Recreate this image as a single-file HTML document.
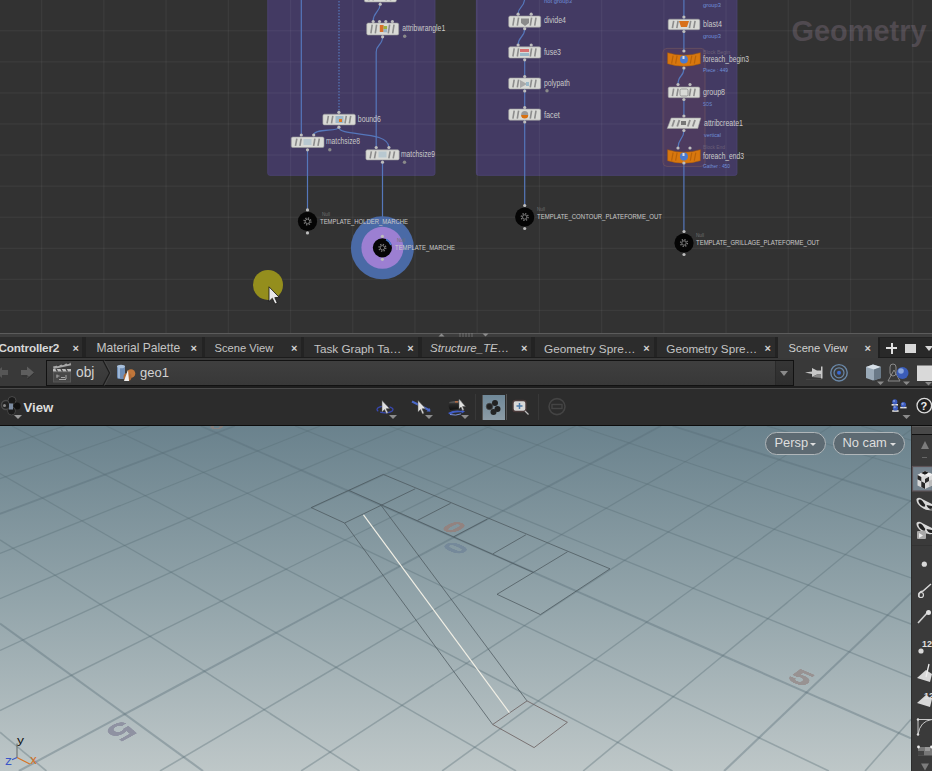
<!DOCTYPE html>
<html><head><meta charset="utf-8"><style>
*{margin:0;padding:0;box-sizing:border-box}
html,body{width:932px;height:771px;overflow:hidden;background:#2b2b2b;font-family:"Liberation Sans",sans-serif}
.abs{position:absolute}
.tab{position:absolute;top:337px;height:20px;background:#2c2c2c}
.tt{position:absolute;top:340.7px;line-height:15px;color:#c4c4c4;font-size:12px;white-space:nowrap}
.x{position:absolute;top:340.8px;font-size:11px;font-weight:700;color:#d4d4d4;line-height:15px}
</style></head><body>
<svg width="932" height="333" viewBox="0 0 932 333" style="position:absolute;left:0;top:0;font-family:"Liberation Sans", sans-serif"><rect width="932" height="333" fill="#323232"/><text x="791.5" y="41" font-size="30" font-weight="700" fill="#504a50" textLength="135" lengthAdjust="spacingAndGlyphs">Geometry</text><rect x="267.8" y="-5" width="167.1" height="180.3" rx="2" fill="#433a63" stroke="#4a4270" stroke-width="1"/><rect x="476.4" y="-5" width="260.5" height="180.3" rx="2" fill="#433a63" stroke="#4a4270" stroke-width="1"/><rect x="41" y="0" width="1.3" height="333" fill="#ffffff" fill-opacity="0.048"/><rect x="103.2" y="0" width="1.3" height="333" fill="#ffffff" fill-opacity="0.048"/><rect x="165.4" y="0" width="1.3" height="333" fill="#ffffff" fill-opacity="0.048"/><rect x="227.7" y="0" width="1.3" height="333" fill="#ffffff" fill-opacity="0.048"/><rect x="289.9" y="0" width="1.3" height="333" fill="#ffffff" fill-opacity="0.048"/><rect x="352.1" y="0" width="1.3" height="333" fill="#ffffff" fill-opacity="0.048"/><rect x="414.3" y="0" width="1.3" height="333" fill="#ffffff" fill-opacity="0.048"/><rect x="476.5" y="0" width="1.3" height="333" fill="#ffffff" fill-opacity="0.048"/><rect x="538.8" y="0" width="1.3" height="333" fill="#ffffff" fill-opacity="0.048"/><rect x="601" y="0" width="1.3" height="333" fill="#ffffff" fill-opacity="0.048"/><rect x="663.2" y="0" width="1.3" height="333" fill="#ffffff" fill-opacity="0.048"/><rect x="725.4" y="0" width="1.3" height="333" fill="#ffffff" fill-opacity="0.048"/><rect x="787.6" y="0" width="1.3" height="333" fill="#ffffff" fill-opacity="0.048"/><rect x="849.9" y="0" width="1.3" height="333" fill="#ffffff" fill-opacity="0.048"/><rect x="912.1" y="0" width="1.3" height="333" fill="#ffffff" fill-opacity="0.048"/><rect x="0" y="30.1" width="932" height="1.3" fill="#ffffff" fill-opacity="0.048"/><rect x="0" y="61.2" width="932" height="1.3" fill="#ffffff" fill-opacity="0.048"/><rect x="0" y="92.3" width="932" height="1.3" fill="#ffffff" fill-opacity="0.048"/><rect x="0" y="123.3" width="932" height="1.3" fill="#ffffff" fill-opacity="0.048"/><rect x="0" y="154.4" width="932" height="1.3" fill="#ffffff" fill-opacity="0.048"/><rect x="0" y="185.5" width="932" height="1.3" fill="#ffffff" fill-opacity="0.048"/><rect x="0" y="216.6" width="932" height="1.3" fill="#ffffff" fill-opacity="0.048"/><rect x="0" y="247.7" width="932" height="1.3" fill="#ffffff" fill-opacity="0.048"/><rect x="0" y="278.7" width="932" height="1.3" fill="#ffffff" fill-opacity="0.048"/><rect x="0" y="309.8" width="932" height="1.3" fill="#ffffff" fill-opacity="0.048"/><rect x="663" y="48.4" width="42" height="118" rx="4" fill="#5a3f5a" fill-opacity="0.45" stroke="#6a5060" stroke-width="0.8"/><path d="M301.3 -2 V135" stroke="#5577bb" stroke-width="1.2" fill="none"/><path d="M339 -2 V112" stroke="#5577bb" stroke-width="1.2" fill="none" stroke-dasharray="1.5 1.5"/><path d="M380.2 4 C380.2 12 373.2 12 373.2 21" stroke="#5577bb" stroke-width="1.2" fill="none"/><path d="M382.6 36.6 C382.6 46 376.2 44 376.2 52 V147.5" stroke="#5577bb" stroke-width="1.2" fill="none"/><path d="M338.9 127.2 C338.9 132 313.7 128 313.7 135" stroke="#5577bb" stroke-width="1.2" fill="none"/><path d="M338.9 127.2 C338.9 137 388.9 130 388.9 147.5" stroke="#5577bb" stroke-width="1.2" fill="none"/><path d="M307.5 150 V211" stroke="#5577bb" stroke-width="1.2" fill="none"/><path d="M382.5 162 V237" stroke="#5577bb" stroke-width="1.2" fill="none"/><path d="M524.7 -2 C524.7 8 518.1 6 518.1 14" stroke="#5577bb" stroke-width="1.2" fill="none"/><path d="M524.7 28.7 C524.7 38 518.1 36 518.1 45" stroke="#5577bb" stroke-width="1.2" fill="none"/><path d="M524.7 59.8 V207" stroke="#5577bb" stroke-width="1.2" fill="none"/><path d="M683.9 -2 V51" stroke="#5577bb" stroke-width="1.2" fill="none"/><path d="M683.9 68 C683.9 78 678 74 678 84.5" stroke="#5577bb" stroke-width="1.2" fill="none"/><path d="M683.9 99.5 V116" stroke="#5577bb" stroke-width="1.2" fill="none"/><path d="M683.9 130.5 C683.9 140 678 138 678 148" stroke="#5577bb" stroke-width="1.2" fill="none"/><path d="M683.9 163.5 V233" stroke="#5577bb" stroke-width="1.2" fill="none"/><rect x="364.4" y="-9" width="32" height="11" rx="1.5" fill="#d9dad6" stroke="#9a9a9a" stroke-width="0.6"/><path d="M369.9 -7.4 L368.6 0.4" stroke="#8c8c8c" stroke-width="1.6"/><path d="M374.3 -7.4 L373 0.4" stroke="#8c8c8c" stroke-width="1.6"/><path d="M387.3 -7.4 L386 0.4" stroke="#8c8c8c" stroke-width="1.6"/><path d="M391.7 -7.4 L390.4 0.4" stroke="#8c8c8c" stroke-width="1.6"/><circle cx="380.2" cy="4.2" r="1.6" fill="#bdbdbd"/><rect x="366.7" y="23" width="32" height="12" rx="1.5" fill="#d9dad6" stroke="#9a9a9a" stroke-width="0.6"/><path d="M372.2 24.6 L370.9 33.4" stroke="#8c8c8c" stroke-width="1.6"/><path d="M376.6 24.6 L375.3 33.4" stroke="#8c8c8c" stroke-width="1.6"/><path d="M389.6 24.6 L388.3 33.4" stroke="#8c8c8c" stroke-width="1.6"/><path d="M394 24.6 L392.7 33.4" stroke="#8c8c8c" stroke-width="1.6"/><rect x="379.8" y="25" width="3.8" height="7" fill="#d8702a"/><rect x="383.5" y="26" width="3.6" height="3" fill="#9ab040"/><rect x="383.5" y="29" width="3.6" height="3.3" fill="#9ab4c4"/><circle cx="373.2" cy="21.5" r="1.6" fill="#bdbdbd"/><circle cx="379.5" cy="21.5" r="1.6" fill="#bdbdbd"/><circle cx="385.8" cy="21.5" r="1.6" fill="#bdbdbd"/><circle cx="392.4" cy="21.5" r="1.6" fill="#bdbdbd"/><circle cx="382.6" cy="36.8" r="1.6" fill="#bdbdbd"/><text x="402.2" y="31.2" font-size="9" fill="#c9c9c9" font-weight="400" textLength="43" lengthAdjust="spacingAndGlyphs">attribwrangle1</text><circle cx="404.7" cy="36.2" r="1.7" fill="#8a8a8a"/><rect x="322.9" y="114.2" width="32.5" height="10.7" rx="1.5" fill="#d9dad6" stroke="#9a9a9a" stroke-width="0.6"/><path d="M328.4 115.8 L327.1 123.3" stroke="#8c8c8c" stroke-width="1.6"/><path d="M332.8 115.8 L331.5 123.3" stroke="#8c8c8c" stroke-width="1.6"/><path d="M346.3 115.8 L345 123.3" stroke="#8c8c8c" stroke-width="1.6"/><path d="M350.7 115.8 L349.4 123.3" stroke="#8c8c8c" stroke-width="1.6"/><rect x="335.5" y="116" width="8" height="7" fill="#9fb8c8"/><rect x="339" y="119" width="3" height="3" fill="#e07820"/><circle cx="338.9" cy="112.3" r="1.6" fill="#bdbdbd"/><circle cx="338.9" cy="127.2" r="1.6" fill="#bdbdbd"/><text x="357.8" y="122" font-size="9" fill="#c9c9c9" font-weight="400" textLength="23" lengthAdjust="spacingAndGlyphs">bound6</text><rect x="291.3" y="137" width="32.7" height="10.5" rx="1.5" fill="#d9dad6" stroke="#9a9a9a" stroke-width="0.6"/><path d="M296.8 138.6 L295.5 145.9" stroke="#8c8c8c" stroke-width="1.6"/><path d="M301.2 138.6 L299.9 145.9" stroke="#8c8c8c" stroke-width="1.6"/><path d="M314.9 138.6 L313.6 145.9" stroke="#8c8c8c" stroke-width="1.6"/><path d="M319.3 138.6 L318 145.9" stroke="#8c8c8c" stroke-width="1.6"/><rect x="303.5" y="139" width="8" height="6" fill="#b8c8d0"/><circle cx="301.3" cy="135" r="1.6" fill="#bdbdbd"/><circle cx="313.7" cy="135" r="1.6" fill="#bdbdbd"/><circle cx="307.5" cy="149.8" r="1.6" fill="#bdbdbd"/><text x="326" y="143.8" font-size="9" fill="#c9c9c9" font-weight="400" textLength="34" lengthAdjust="spacingAndGlyphs">matchsize8</text><circle cx="329.8" cy="149.8" r="1.7" fill="#8a8a8a"/><rect x="365.9" y="149.8" width="33.3" height="10.1" rx="1.5" fill="#d9dad6" stroke="#9a9a9a" stroke-width="0.6"/><path d="M371.4 151.4 L370.1 158.3" stroke="#8c8c8c" stroke-width="1.6"/><path d="M375.8 151.4 L374.5 158.3" stroke="#8c8c8c" stroke-width="1.6"/><path d="M390.1 151.4 L388.8 158.3" stroke="#8c8c8c" stroke-width="1.6"/><path d="M394.5 151.4 L393.2 158.3" stroke="#8c8c8c" stroke-width="1.6"/><rect x="378.5" y="151.5" width="8" height="6" fill="#b8c8d0"/><circle cx="376.2" cy="147.5" r="1.6" fill="#bdbdbd"/><circle cx="388.9" cy="147.5" r="1.6" fill="#bdbdbd"/><circle cx="382.5" cy="162.2" r="1.6" fill="#bdbdbd"/><text x="401" y="156.8" font-size="9" fill="#c9c9c9" font-weight="400" textLength="34" lengthAdjust="spacingAndGlyphs">matchsize9</text><circle cx="404.5" cy="162.2" r="1.7" fill="#8a8a8a"/><circle cx="382.4" cy="247.8" r="31.5" fill="#4a6aa6"/><circle cx="382.4" cy="247.8" r="21" fill="#9c7fd2"/><circle cx="307.5" cy="221.4" r="9.6" fill="#050505"/><circle cx="307.5" cy="221.4" r="3.4" fill="none" stroke="#7a7a7a" stroke-width="1.4" stroke-dasharray="1.3 1.37"/><circle cx="307.5" cy="221.4" r="2.2" fill="none" stroke="#7a7a7a" stroke-width="1"/><circle cx="307.5" cy="209.9" r="1.6" fill="#bdbdbd"/><circle cx="307.5" cy="232.9" r="1.6" fill="#bdbdbd"/><circle cx="382.4" cy="247.8" r="9.6" fill="#050505"/><circle cx="382.4" cy="247.8" r="3.4" fill="none" stroke="#7a7a7a" stroke-width="1.4" stroke-dasharray="1.3 1.37"/><circle cx="382.4" cy="247.8" r="2.2" fill="none" stroke="#7a7a7a" stroke-width="1"/><circle cx="382.4" cy="236.3" r="1.6" fill="#bdbdbd"/><circle cx="382.4" cy="259.3" r="1.6" fill="#bdbdbd"/><path d="M386 239.5 A9 9 0 0 1 391 245" stroke="#4a7ad0" stroke-width="1.6" fill="none"/><text x="320" y="223.5" font-size="7" fill="#c9c9c9" font-weight="400" textLength="88" lengthAdjust="spacingAndGlyphs">TEMPLATE_HOLDER_MARCHE</text><text x="322" y="215.5" font-size="5" fill="#707070" font-weight="400" textLength="8" lengthAdjust="spacingAndGlyphs">Null</text><text x="395" y="249.8" font-size="7" fill="#c9c9c9" font-weight="400" textLength="60" lengthAdjust="spacingAndGlyphs">TEMPLATE_MARCHE</text><text x="397" y="242" font-size="5" fill="#707070" font-weight="400" textLength="8" lengthAdjust="spacingAndGlyphs">Null</text><text x="544" y="3" font-size="6" fill="#6f8fd8" font-weight="400" textLength="28" lengthAdjust="spacingAndGlyphs">not group3</text><rect x="508.7" y="16" width="32" height="11.2" rx="1.5" fill="#d9dad6" stroke="#9a9a9a" stroke-width="0.6"/><path d="M514.2 17.6 L512.9 25.6" stroke="#8c8c8c" stroke-width="1.6"/><path d="M518.6 17.6 L517.3 25.6" stroke="#8c8c8c" stroke-width="1.6"/><path d="M531.6 17.6 L530.3 25.6" stroke="#8c8c8c" stroke-width="1.6"/><path d="M536 17.6 L534.7 25.6" stroke="#8c8c8c" stroke-width="1.6"/><path d="M521 18.5 H529 V23 L525 26 L521 23 Z" fill="#8a8a8a"/><circle cx="518.1" cy="14.2" r="1.6" fill="#bdbdbd"/><circle cx="531.2" cy="14.2" r="1.6" fill="#bdbdbd"/><circle cx="524.7" cy="28.7" r="1.6" fill="#bdbdbd"/><text x="543.9" y="23" font-size="9" fill="#c9c9c9" font-weight="400" textLength="22" lengthAdjust="spacingAndGlyphs">divide4</text><rect x="508.7" y="46.8" width="32" height="11.3" rx="1.5" fill="#d9dad6" stroke="#9a9a9a" stroke-width="0.6"/><path d="M514.2 48.4 L512.9 56.5" stroke="#8c8c8c" stroke-width="1.6"/><path d="M518.6 48.4 L517.3 56.5" stroke="#8c8c8c" stroke-width="1.6"/><path d="M531.6 48.4 L530.3 56.5" stroke="#8c8c8c" stroke-width="1.6"/><path d="M536 48.4 L534.7 56.5" stroke="#8c8c8c" stroke-width="1.6"/><rect x="520" y="49" width="9" height="3" fill="#d77070"/><rect x="520" y="53" width="9" height="3" fill="#9ab8c8"/><circle cx="518.1" cy="45" r="1.6" fill="#bdbdbd"/><circle cx="531.2" cy="45" r="1.6" fill="#bdbdbd"/><circle cx="524.7" cy="59.8" r="1.6" fill="#bdbdbd"/><text x="543.9" y="55" font-size="9" fill="#c9c9c9" font-weight="400" textLength="17" lengthAdjust="spacingAndGlyphs">fuse3</text><rect x="508.7" y="78" width="32" height="11" rx="1.5" fill="#d9dad6" stroke="#9a9a9a" stroke-width="0.6"/><path d="M514.2 79.6 L512.9 87.4" stroke="#8c8c8c" stroke-width="1.6"/><path d="M518.6 79.6 L517.3 87.4" stroke="#8c8c8c" stroke-width="1.6"/><path d="M531.6 79.6 L530.3 87.4" stroke="#8c8c8c" stroke-width="1.6"/><path d="M536 79.6 L534.7 87.4" stroke="#8c8c8c" stroke-width="1.6"/><path d="M520 80 L527 84 L520 88 Z" fill="#a8a8a8"/><rect x="526" y="82" width="3" height="4" fill="#9ab8c8"/><circle cx="524.7" cy="76.5" r="1.6" fill="#bdbdbd"/><circle cx="524.7" cy="91" r="1.6" fill="#bdbdbd"/><text x="543.9" y="86" font-size="9" fill="#c9c9c9" font-weight="400" textLength="26" lengthAdjust="spacingAndGlyphs">polypath</text><circle cx="547" cy="90.8" r="1.7" fill="#8a8a8a"/><rect x="508.7" y="109" width="32" height="11.2" rx="1.5" fill="#d9dad6" stroke="#9a9a9a" stroke-width="0.6"/><path d="M514.2 110.6 L512.9 118.6" stroke="#8c8c8c" stroke-width="1.6"/><path d="M518.6 110.6 L517.3 118.6" stroke="#8c8c8c" stroke-width="1.6"/><path d="M531.6 110.6 L530.3 118.6" stroke="#8c8c8c" stroke-width="1.6"/><path d="M536 110.6 L534.7 118.6" stroke="#8c8c8c" stroke-width="1.6"/><circle cx="524.7" cy="114.5" r="3.5" fill="#999"/><path d="M521.2 115 H528.2 A3.5 3.5 0 0 1 521.2 115 Z" fill="#d8700f"/><circle cx="524.7" cy="107.5" r="1.6" fill="#bdbdbd"/><circle cx="524.7" cy="122" r="1.6" fill="#bdbdbd"/><text x="543.9" y="117.5" font-size="9" fill="#c9c9c9" font-weight="400" textLength="16" lengthAdjust="spacingAndGlyphs">facet</text><circle cx="524.7" cy="217" r="9.6" fill="#050505"/><circle cx="524.7" cy="217" r="3.4" fill="none" stroke="#7a7a7a" stroke-width="1.4" stroke-dasharray="1.3 1.37"/><circle cx="524.7" cy="217" r="2.2" fill="none" stroke="#7a7a7a" stroke-width="1"/><circle cx="524.7" cy="205.5" r="1.6" fill="#bdbdbd"/><circle cx="524.7" cy="228.5" r="1.6" fill="#bdbdbd"/><text x="537" y="218.7" font-size="7" fill="#c9c9c9" font-weight="400" textLength="125" lengthAdjust="spacingAndGlyphs">TEMPLATE_CONTOUR_PLATEFORME_OUT</text><text x="537" y="211" font-size="5" fill="#707070" font-weight="400" textLength="8" lengthAdjust="spacingAndGlyphs">Null</text><text x="703" y="7" font-size="6" fill="#6f8fd8" font-weight="400" textLength="18" lengthAdjust="spacingAndGlyphs">group3</text><rect x="668.2" y="19.2" width="31.6" height="10.5" rx="1.5" fill="#d9dad6" stroke="#9a9a9a" stroke-width="0.6"/><path d="M673.7 20.8 L672.4 28.1" stroke="#8c8c8c" stroke-width="1.6"/><path d="M678.1 20.8 L676.8 28.1" stroke="#8c8c8c" stroke-width="1.6"/><path d="M690.7 20.8 L689.4 28.1" stroke="#8c8c8c" stroke-width="1.6"/><path d="M695.1 20.8 L693.8 28.1" stroke="#8c8c8c" stroke-width="1.6"/><path d="M679 21 H689 L687 27 H681 Z" fill="#d8701a"/><circle cx="683.9" cy="17" r="1.6" fill="#bdbdbd"/><circle cx="683.9" cy="31.5" r="1.6" fill="#bdbdbd"/><text x="703" y="26.5" font-size="9" fill="#c9c9c9" font-weight="400" textLength="19" lengthAdjust="spacingAndGlyphs">blast4</text><text x="703" y="37.5" font-size="6" fill="#6f8fd8" font-weight="400" textLength="18" lengthAdjust="spacingAndGlyphs">group3</text><path d="M667.6 52.7 Q684 57.7 700.3 52.7 V63.7 Q684 68.7 667.6 63.7 Z" fill="#d8770e" stroke="#a85a08" stroke-width="0.5"/><path d="M673.1 55.7 L671.6 63.7" stroke="#b8620a" stroke-width="1.2"/><path d="M677.1 55.7 L675.6 63.7" stroke="#b8620a" stroke-width="1.2"/><path d="M691.8 55.7 L690.3 63.7" stroke="#b8620a" stroke-width="1.2"/><path d="M695.8 55.7 L694.3 63.7" stroke="#b8620a" stroke-width="1.2"/><circle cx="683.9" cy="59.5" r="4" fill="#4a7ad0"/><rect x="682.5" y="56" width="2" height="3" fill="#ddd"/><circle cx="683.9" cy="51" r="1.6" fill="#bdbdbd"/><circle cx="683.9" cy="68" r="1.6" fill="#bdbdbd"/><text x="703" y="54" font-size="5.5" fill="#6a5f78" font-weight="400" textLength="27" lengthAdjust="spacingAndGlyphs">Block Begin</text><text x="703" y="62" font-size="9" fill="#c9c9c9" font-weight="400" textLength="46" lengthAdjust="spacingAndGlyphs">foreach_begin3</text><text x="703" y="71.5" font-size="5.5" fill="#6f8fd8" font-weight="400" textLength="25" lengthAdjust="spacingAndGlyphs">Piece : 449</text><rect x="668.2" y="87" width="31.6" height="10.7" rx="1.5" fill="#d9dad6" stroke="#9a9a9a" stroke-width="0.6"/><path d="M673.7 88.6 L672.4 96.1" stroke="#8c8c8c" stroke-width="1.6"/><path d="M678.1 88.6 L676.8 96.1" stroke="#8c8c8c" stroke-width="1.6"/><path d="M690.7 88.6 L689.4 96.1" stroke="#8c8c8c" stroke-width="1.6"/><path d="M695.1 88.6 L693.8 96.1" stroke="#8c8c8c" stroke-width="1.6"/><rect x="680" y="89" width="8" height="7" rx="1.5" fill="none" stroke="#888" stroke-width="0.8"/><circle cx="678" cy="84.5" r="1.6" fill="#bdbdbd"/><circle cx="690" cy="84.5" r="1.6" fill="#bdbdbd"/><circle cx="683.9" cy="99.5" r="1.6" fill="#bdbdbd"/><text x="703" y="94.5" font-size="9" fill="#c9c9c9" font-weight="400" textLength="22" lengthAdjust="spacingAndGlyphs">group8</text><text x="703" y="105.5" font-size="5.5" fill="#6f8fd8" font-weight="400" textLength="9" lengthAdjust="spacingAndGlyphs">SOS</text><path d="M671.2 118 H700.8 L697.8 128.5 H667.2 Z" fill="#d9dad6" stroke="#9a9a9a" stroke-width="0.6"/><path d="M674.4 120 L672.2 126.5" stroke="#8e8e8e" stroke-width="1.8"/><path d="M679.4 120 L677.2 126.5" stroke="#8e8e8e" stroke-width="1.8"/><path d="M690 120 L687.8 126.5" stroke="#8e8e8e" stroke-width="1.8"/><path d="M695 120 L692.8 126.5" stroke="#8e8e8e" stroke-width="1.8"/><rect x="681" y="121" width="5" height="4" fill="#777"/><circle cx="683.9" cy="116" r="1.6" fill="#bdbdbd"/><circle cx="683.9" cy="130.5" r="1.6" fill="#bdbdbd"/><text x="704" y="125.5" font-size="9" fill="#c9c9c9" font-weight="400" textLength="39" lengthAdjust="spacingAndGlyphs">attribcreate1</text><text x="704" y="136.5" font-size="5.5" fill="#6f8fd8" font-weight="400" textLength="17" lengthAdjust="spacingAndGlyphs">vertical</text><path d="M667.6 149.7 Q684 154.7 700.3 149.7 V160.7 Q684 165.7 667.6 160.7 Z" fill="#d8770e" stroke="#a85a08" stroke-width="0.5"/><path d="M673.1 152.7 L671.6 160.7" stroke="#b8620a" stroke-width="1.2"/><path d="M677.1 152.7 L675.6 160.7" stroke="#b8620a" stroke-width="1.2"/><path d="M691.8 152.7 L690.3 160.7" stroke="#b8620a" stroke-width="1.2"/><path d="M695.8 152.7 L694.3 160.7" stroke="#b8620a" stroke-width="1.2"/><circle cx="683.9" cy="156.5" r="4" fill="#4a7ad0"/><rect x="682.5" y="153" width="2" height="3" fill="#ddd"/><circle cx="678" cy="148" r="1.6" fill="#bdbdbd"/><circle cx="690" cy="148" r="1.6" fill="#bdbdbd"/><circle cx="683.9" cy="163" r="1.6" fill="#bdbdbd"/><text x="703" y="149" font-size="5.5" fill="#6a5f78" font-weight="400" textLength="22" lengthAdjust="spacingAndGlyphs">Block End</text><text x="703" y="158.5" font-size="9" fill="#c9c9c9" font-weight="400" textLength="41" lengthAdjust="spacingAndGlyphs">foreach_end3</text><text x="703" y="167.5" font-size="5.5" fill="#6f8fd8" font-weight="400" textLength="27" lengthAdjust="spacingAndGlyphs">Gather : 450</text><circle cx="684" cy="243" r="9.6" fill="#050505"/><circle cx="684" cy="243" r="3.4" fill="none" stroke="#7a7a7a" stroke-width="1.4" stroke-dasharray="1.3 1.37"/><circle cx="684" cy="243" r="2.2" fill="none" stroke="#7a7a7a" stroke-width="1"/><circle cx="684" cy="231.5" r="1.6" fill="#bdbdbd"/><circle cx="684" cy="254.5" r="1.6" fill="#bdbdbd"/><text x="696" y="244.7" font-size="7" fill="#c9c9c9" font-weight="400" textLength="123.5" lengthAdjust="spacingAndGlyphs">TEMPLATE_GRILLAGE_PLATEFORME_OUT</text><text x="696" y="237" font-size="5" fill="#707070" font-weight="400" textLength="8" lengthAdjust="spacingAndGlyphs">Null</text><circle cx="268" cy="284.9" r="15" fill="#948e1d"/><path d="M269 286.8 V301.5 L272.3 298.3 L275 304 L277.3 303 L274.8 297.6 L279.3 297.4 Z" fill="#e8e8e8" stroke="#111" stroke-width="0.8"/></svg>
<div class="abs" style="left:0;top:333px;width:932px;height:1px;background:#5c5c5c"></div>
<div class="abs" style="left:0;top:334px;width:932px;height:3px;background:#3d3d3d"></div>
<div class="abs" style="left:0;top:337px;width:932px;height:21px;background:#232323"></div>
<div class="tab" style="left:-20px;width:102px"></div><span class="tt" style="left:-1.5px;font-size:11.8px;font-weight:700;color:#d8d8d8;letter-spacing:-0.2px;">Controller2</span><span class="x" style="left:72.5px">×</span><div class="tab" style="left:85.5px;width:116.0px"></div><span class="tt" style="left:96.5px;font-size:12.05px;">Material Palette</span><span class="x" style="left:190.5px">×</span><div class="tab" style="left:204.5px;width:96.0px"></div><span class="tt" style="left:214.5px;font-size:11.2px;">Scene View</span><span class="x" style="left:291.0px">×</span><div class="tab" style="left:304px;width:114px"></div><span class="tt" style="left:314px;font-size:11.75px;">Task Graph Ta…</span><span class="x" style="left:407.2px">×</span><div class="tab" style="left:421.5px;width:109.5px"></div><span class="tt" style="left:430px;font-size:11.5px;font-style:italic;">Structure_TE…</span><span class="x" style="left:521.1px">×</span><div class="tab" style="left:534.5px;width:119.0px"></div><span class="tt" style="left:544px;font-size:11.75px;">Geometry Spre…</span><span class="x" style="left:643.3px">×</span><div class="tab" style="left:657px;width:118px"></div><span class="tt" style="left:666.3px;font-size:11.7px;">Geometry Spre…</span><span class="x" style="left:764.6px">×</span>
<svg class="abs" style="left:430px;top:330px" width="70" height="10" viewBox="430 330 70 10"><path d="M438.5 336.5 h6 l-3 -3 z" fill="#8c8c8c"/><path d="M482.5 333.5 h6 l-3 3 z" fill="#8c8c8c"/><g fill="#9a9a9a"><rect x="459.5" y="333.5" width="1" height="1"/><rect x="462.5" y="333.5" width="1" height="1"/><rect x="465.5" y="333.5" width="1" height="1"/><rect x="468.5" y="333.5" width="1" height="1"/><rect x="471.5" y="333.5" width="1" height="1"/><rect x="459.5" y="335.5" width="1" height="1"/><rect x="462.5" y="335.5" width="1" height="1"/><rect x="465.5" y="335.5" width="1" height="1"/><rect x="468.5" y="335.5" width="1" height="1"/><rect x="471.5" y="335.5" width="1" height="1"/></g></svg>
<div class="tab" style="left:778px;width:100px;background:#3a3a3a"></div><span class="tt" style="left:788.6px;color:#d0d0d0;font-size:11.2px">Scene View</span><span class="x" style="left:864.5px">×</span>
<div class="abs" style="left:878px;top:338px;width:54px;height:19px;background:#292929;border-left:2px solid #202020"></div><div class="abs" style="left:886px;top:347px;width:11px;height:2px;background:#e0e0e0"></div><div class="abs" style="left:890.5px;top:342.5px;width:2px;height:11px;background:#e0e0e0"></div>
<div class="abs" style="left:905px;top:344px;width:11px;height:9px;background:#d8d8d8"></div>
<div class="abs" style="left:925px;top:346px;width:0;height:0;border-left:4px solid transparent;border-right:4px solid transparent;border-top:5px solid #d8d8d8"></div>
<!-- path bar -->
<div class="abs" style="left:0;top:357px;width:932px;height:1px;background:#1c1c1c"></div>
<div class="abs" style="left:0;top:358px;width:932px;height:28px;background:#393939"></div>
<div class="abs" style="left:778px;top:357px;width:100px;height:1px;background:#3a3a3a"></div>
<div class="abs" style="left:46px;top:360px;width:748px;height:26px;background:linear-gradient(#3f3f3f,#383838);border:1px solid #121212"></div>
<div class="abs" style="left:775px;top:361px;width:18px;height:24px;background:linear-gradient(#353535,#2e2e2e);border-left:1px solid #2a2a2a"></div>
<div class="abs" style="left:780px;top:371px;width:0;height:0;border-left:4px solid transparent;border-right:4px solid transparent;border-top:5px solid #8a8a8a"></div>
<div class="abs" style="left:0;top:386px;width:932px;height:2px;background:#1e1e1e"></div>
<div class="abs" style="left:0;top:388px;width:932px;height:1px;background:#4a4a4a"></div>
<div class="abs" style="left:76px;top:365px;color:#d2d2d2;font-size:13.8px;line-height:16px">obj</div>
<div class="abs" style="left:140px;top:365px;color:#d2d2d2;font-size:13px;line-height:16px">geo1</div>
<!-- toolbar -->
<div class="abs" style="left:0;top:389px;width:932px;height:36px;background:#2c2c2c"></div>
<div class="abs" style="left:23.5px;top:401px;color:#dcdcdc;font-size:13.2px;font-weight:700;line-height:14px">View</div>
<div class="abs" style="left:0;top:425px;width:932px;height:1px;background:#0c0c0c"></div>
<svg width="932" height="88" viewBox="0 338 932 88" style="position:absolute;left:0;top:338px"><path d="M-2 372 h8 v-4.5 l0 0 v14 M-2 372" fill="none"/><path d="M8 370 H2 V367 L-4 372.5 L2 378 V375 H8 Z" fill="#565656"/><path d="M21 370 H27 V366.5 L34 372.5 L27 378.5 V375 H21 Z" fill="#5e5e5e"/><path d="M22 376 H28 V379 L34 373" stroke="#303030" stroke-width="0.8" fill="none"/><rect x="53" y="371.5" width="18" height="11" fill="#575757"/><rect x="54" y="372.5" width="16" height="9" fill="#484848"/><path d="M56.5 376 h3 M57 374.5 v3.5 M61 377.5 h4 M66 375 v4 M59 379.5 h7" stroke="#b0b0b0" stroke-width="0.9"/><path d="M53 366.5 L70.5 362.8 L71.2 365.3 L53.6 369 Z" fill="#a8a8a8"/><path d="M57 365.6 l2.5 -0.6 M62 364.6 l2.5 -0.6 M67 363.6 l2.5 -0.6" stroke="#3a3a3a" stroke-width="1.3"/><rect x="53" y="369" width="18" height="2.5" fill="#bdbdbd"/><path d="M56 369 l1.5 2.5 M61 369 l1.5 2.5 M66 369 l1.5 2.5" stroke="#3a3a3a" stroke-width="1.3"/><path d="M103 360.5 L109.5 373 L103 385.5" fill="none" stroke="#1c1c1c" stroke-width="1.2"/><path d="M104.5 360.5 L111 373 L104.5 385.5" fill="none" stroke="#4a4a4a" stroke-width="0.8"/><rect x="117" y="366" width="8" height="13" rx="2" fill="#6d8cb4"/><ellipse cx="121" cy="366.5" rx="4" ry="1.8" fill="#a8c0dc"/><rect x="118" y="368" width="2" height="10" fill="#9cb6d6"/><circle cx="131" cy="373.5" r="4.3" fill="#c0763a"/><circle cx="127.5" cy="377" r="4" fill="#b06a34"/><path d="M124 381 L128 370 L129 381 Z" fill="#f0f0f0"/><path d="M805 372.5 L812 371.5 V374 Z" fill="#c8c8c8"/><path d="M812 368 L817 370.5 H821 V366.5 H822.5 V378.5 H821 V374.5 H817 L812 377 Z" fill="#c9c9c9"/><path d="M812 377 L817 374.5 H821 V378" fill="#8a8a8a"/><rect x="806" y="379" width="16" height="1" fill="#444"/><circle cx="839" cy="372.8" r="8.2" fill="none" stroke="#6a88a8" stroke-width="1.4"/><circle cx="839" cy="372.8" r="5" fill="none" stroke="#6a88a8" stroke-width="1.2"/><circle cx="839" cy="372.8" r="2" fill="#3a6ad0"/><path d="M866 367 L873 364.5 L881 367 V378 L873 380.5 L866 378 Z" fill="#9aaab8"/><path d="M866 367 L873 364.5 L881 367 L874 369.5 Z" fill="#d8e0e8"/><path d="M874 369.5 L881 367 V378 L874 380.5Z" fill="#6a7a88"/><path d="M877 381.5 h7 l-3.5 3.5 z" fill="#8a8a8a"/><rect x="890" y="364" width="6" height="12" rx="3" fill="none" stroke="#8a8a8a" stroke-width="1"/><path d="M888 381 L894 370 L900 381 Z" fill="none" stroke="#8a8a8a" stroke-width="1"/><circle cx="902.5" cy="373" r="6" fill="#3a5cb8"/><circle cx="901" cy="371" r="2.8" fill="#8aa6dc"/><path d="M903 381.5 h7 l-3.5 3.5 z" fill="#8a8a8a"/><rect x="917" y="365.5" width="16" height="15.5" fill="#d9d9d9"/><path d="M925 382 h7 l-3.5 3.5 z" fill="#8a8a8a"/><circle cx="6" cy="405" r="4.5" fill="#222" stroke="#4a4a4a" stroke-width="1.5"/><circle cx="4.5" cy="405.5" r="1.5" fill="#888"/><circle cx="12" cy="400.5" r="4" fill="#1a1a1a" stroke="#4a4a4a" stroke-width="1"/><circle cx="17" cy="406" r="3.5" fill="#111"/><circle cx="11.5" cy="411" r="4" fill="#1a1a1a" stroke="#444" stroke-width="1"/><rect x="9" y="403.5" width="4" height="6" fill="#7a8aa0"/><path d="M14 415 h8 l-4.0 4 z" fill="#9a9a9a"/><ellipse cx="385" cy="409.5" rx="8" ry="3.3" fill="none" stroke="#3848b0" stroke-width="1.3" stroke-dasharray="14 2 14 2"/><path d="M382 400.5 V412 L384.5 409.5 L386.5 413.5 L388 412.8 L386 408.8 L389.5 408.5 Z" fill="#e0e0e0" stroke="#555" stroke-width="0.5"/><path d="M389 415 h8 l-4.0 4 z" fill="#8c8c8c"/><path d="M412 401.5 L430 410.5" stroke="#4a68c8" stroke-width="2"/><path d="M429.5 408 L430.5 411.5 L426.5 411.5 Z" fill="#4a68c8"/><path d="M418 400.5 V412 L420.5 409.5 L422.5 414 L424 413.3 L422 408.8 L425.5 408.5 Z" fill="#e0e0e0" stroke="#555" stroke-width="0.5"/><path d="M425 415 h8 l-4.0 4 z" fill="#8c8c8c"/><defs><linearGradient id="cyl" x1="0" y1="0" x2="0" y2="1"><stop offset="0" stop-color="#8a8a8a"/><stop offset="0.35" stop-color="#2a2a2a"/><stop offset="1" stop-color="#111"/></linearGradient></defs><path d="M449.5 402 L461 400.5 Q463.5 404.5 461.5 408.5 L450 410 Q447.5 406 449.5 402 Z" fill="url(#cyl)"/><rect x="455" y="401.3" width="3" height="1.2" fill="#c86a3a"/><path d="M448 413 Q454 409.5 462 411 L461 409.5 L465 411.5 L461.5 413.5 L461.8 412.3 Q455 411.5 450 414.5 Z" fill="#3f5cc8"/><path d="M450 414.5 Q456 416 461 413.8" stroke="#7a90d8" stroke-width="1" fill="none"/><path d="M459 399 V409 L461 407 L462.5 410.5 L464 410 L462.5 406.5 L465.5 406.5 Z" fill="#e0e0e0" stroke="#555" stroke-width="0.5"/><path d="M461 415 h8 l-4.0 4 z" fill="#8c8c8c"/><rect x="475" y="394" width="1" height="26" fill="#383838"/><rect x="538" y="394" width="1" height="26" fill="#383838"/><defs><linearGradient id="ab" x1="0" y1="0" x2="0" y2="1"><stop offset="0" stop-color="#6f8898"/><stop offset="1" stop-color="#8d9ca6"/></linearGradient></defs><rect x="482" y="395" width="23" height="25" fill="url(#ab)"/><rect x="482" y="395" width="1" height="25" fill="#555"/><rect x="506" y="394" width="1" height="26" fill="#555"/><circle cx="489.5" cy="406.5" r="3.2" fill="#222" stroke="#444" stroke-width="0.8"/><circle cx="495" cy="403" r="3" fill="#222"/><circle cx="497.5" cy="409" r="3" fill="#222"/><circle cx="493.5" cy="412" r="3" fill="#252525"/><rect x="513" y="400.5" width="13" height="11" rx="2.5" fill="#d8d8d8" stroke="#4a3a3a" stroke-width="1.4"/><path d="M519.5 403 v6 M516.5 406 h6" stroke="#4a78a8" stroke-width="1.5"/><path d="M525 411 L528.5 414.5" stroke="#bbb" stroke-width="1.2"/><circle cx="557" cy="406.6" r="8" fill="none" stroke="#444" stroke-width="1.6"/><rect x="552" y="404.5" width="10" height="4" fill="none" stroke="#444" stroke-width="1.4"/><rect x="891.5999999999999" y="404.0" width="6.4" height="1.6" fill="#e4e4e4"/><circle cx="894.8" cy="401.8" r="2.6" fill="#3d5cc0"/><circle cx="894.0999999999999" cy="401.0" r="1.1" fill="#7d96d8"/><rect x="900.1999999999999" y="406.8" width="6.4" height="1.6" fill="#e4e4e4"/><circle cx="903.4" cy="404.6" r="2.6" fill="#3d5cc0"/><circle cx="902.6999999999999" cy="403.8" r="1.1" fill="#7d96d8"/><rect x="892.1999999999999" y="410.2" width="6.4" height="1.6" fill="#e4e4e4"/><circle cx="895.4" cy="408" r="2.6" fill="#3d5cc0"/><circle cx="894.6999999999999" cy="407.2" r="1.1" fill="#7d96d8"/><path d="M902.5 415 h8 l-4.0 4 z" fill="#8c8c8c"/><circle cx="924.3" cy="405.6" r="7.3" fill="#202020" stroke="#dadada" stroke-width="1.3"/><text x="920.5" y="410" font-size="11" font-weight="700" fill="#eee" font-family="Liberation Sans">?</text></svg>
<svg width="911" height="345" viewBox="0 426 911 345" style="position:absolute;left:0;top:426px"><defs><linearGradient id="vg" x1="0" y1="0" x2="0" y2="1"><stop offset="0" stop-color="#6a828d"/><stop offset="0.5" stop-color="#92a4aa"/><stop offset="1" stop-color="#bec7c8"/></linearGradient></defs><rect x="0" y="426" width="911" height="345" fill="url(#vg)"/><line x1="861.15" y1="426" x2="867.38" y2="427.77" stroke="#586c76" stroke-opacity="0.37" stroke-width="1.1"/><line x1="867.38" y1="427.77" x2="873.61" y2="429.53" stroke="#586c76" stroke-opacity="0.37" stroke-width="1.1"/><line x1="873.61" y1="429.53" x2="879.84" y2="431.3" stroke="#586c76" stroke-opacity="0.37" stroke-width="1.11"/><line x1="879.84" y1="431.3" x2="886.07" y2="433.07" stroke="#586c76" stroke-opacity="0.37" stroke-width="1.11"/><line x1="886.07" y1="433.07" x2="892.31" y2="434.83" stroke="#586c76" stroke-opacity="0.37" stroke-width="1.11"/><line x1="892.31" y1="434.83" x2="898.54" y2="436.6" stroke="#586c76" stroke-opacity="0.37" stroke-width="1.12"/><line x1="898.54" y1="436.6" x2="904.77" y2="438.37" stroke="#586c76" stroke-opacity="0.37" stroke-width="1.12"/><line x1="904.77" y1="438.37" x2="911" y2="440.13" stroke="#586c76" stroke-opacity="0.37" stroke-width="1.12"/><line x1="64.3" y1="426" x2="56.26" y2="428.68" stroke="#586c76" stroke-opacity="0.37" stroke-width="1.1"/><line x1="56.26" y1="428.68" x2="48.22" y2="431.36" stroke="#586c76" stroke-opacity="0.37" stroke-width="1.11"/><line x1="48.22" y1="431.36" x2="40.19" y2="434.04" stroke="#586c76" stroke-opacity="0.37" stroke-width="1.11"/><line x1="40.19" y1="434.04" x2="32.15" y2="436.72" stroke="#586c76" stroke-opacity="0.37" stroke-width="1.11"/><line x1="32.15" y1="436.72" x2="24.11" y2="439.4" stroke="#586c76" stroke-opacity="0.37" stroke-width="1.12"/><line x1="24.11" y1="439.4" x2="16.07" y2="442.08" stroke="#586c76" stroke-opacity="0.37" stroke-width="1.12"/><line x1="16.07" y1="442.08" x2="8.04" y2="444.76" stroke="#586c76" stroke-opacity="0.37" stroke-width="1.13"/><line x1="8.04" y1="444.76" x2="0" y2="447.44" stroke="#586c76" stroke-opacity="0.37" stroke-width="1.13"/><line x1="766.9" y1="426" x2="784.92" y2="431.38" stroke="#586c76" stroke-opacity="0.37" stroke-width="1.1"/><line x1="784.92" y1="431.38" x2="802.93" y2="436.76" stroke="#586c76" stroke-opacity="0.37" stroke-width="1.11"/><line x1="802.93" y1="436.76" x2="820.94" y2="442.14" stroke="#586c76" stroke-opacity="0.37" stroke-width="1.12"/><line x1="820.94" y1="442.14" x2="838.95" y2="447.52" stroke="#586c76" stroke-opacity="0.37" stroke-width="1.13"/><line x1="838.95" y1="447.52" x2="856.96" y2="452.89" stroke="#586c76" stroke-opacity="0.37" stroke-width="1.14"/><line x1="856.96" y1="452.89" x2="874.98" y2="458.27" stroke="#586c76" stroke-opacity="0.37" stroke-width="1.15"/><line x1="874.98" y1="458.27" x2="892.99" y2="463.65" stroke="#586c76" stroke-opacity="0.37" stroke-width="1.16"/><line x1="892.99" y1="463.65" x2="911" y2="469.03" stroke="#586c76" stroke-opacity="0.37" stroke-width="1.16"/><line x1="149.58" y1="426" x2="130.88" y2="432.59" stroke="#586c76" stroke-opacity="0.37" stroke-width="1.11"/><line x1="130.88" y1="432.59" x2="112.19" y2="439.19" stroke="#586c76" stroke-opacity="0.37" stroke-width="1.12"/><line x1="112.19" y1="439.19" x2="93.49" y2="445.78" stroke="#586c76" stroke-opacity="0.37" stroke-width="1.13"/><line x1="93.49" y1="445.78" x2="74.79" y2="452.37" stroke="#586c76" stroke-opacity="0.37" stroke-width="1.14"/><line x1="74.79" y1="452.37" x2="56.09" y2="458.97" stroke="#586c76" stroke-opacity="0.37" stroke-width="1.15"/><line x1="56.09" y1="458.97" x2="37.4" y2="465.56" stroke="#586c76" stroke-opacity="0.37" stroke-width="1.16"/><line x1="37.4" y1="465.56" x2="18.7" y2="472.16" stroke="#586c76" stroke-opacity="0.37" stroke-width="1.17"/><line x1="18.7" y1="472.16" x2="0" y2="478.75" stroke="#586c76" stroke-opacity="0.37" stroke-width="1.18"/><line x1="672.63" y1="426" x2="702.43" y2="435.4" stroke="#586c76" stroke-opacity="0.38" stroke-width="1.76"/><line x1="702.43" y1="435.4" x2="732.22" y2="444.8" stroke="#586c76" stroke-opacity="0.38" stroke-width="1.77"/><line x1="732.22" y1="444.8" x2="762.02" y2="454.2" stroke="#586c76" stroke-opacity="0.38" stroke-width="1.78"/><line x1="762.02" y1="454.2" x2="791.82" y2="463.6" stroke="#586c76" stroke-opacity="0.38" stroke-width="1.79"/><line x1="791.82" y1="463.6" x2="821.61" y2="473" stroke="#586c76" stroke-opacity="0.38" stroke-width="1.8"/><line x1="821.61" y1="473" x2="851.41" y2="482.4" stroke="#586c76" stroke-opacity="0.38" stroke-width="1.81"/><line x1="851.41" y1="482.4" x2="881.2" y2="491.8" stroke="#586c76" stroke-opacity="0.38" stroke-width="1.82"/><line x1="881.2" y1="491.8" x2="911" y2="501.2" stroke="#586c76" stroke-opacity="0.38" stroke-width="1.83"/><line x1="234.84" y1="426" x2="205.49" y2="436.98" stroke="#586c76" stroke-opacity="0.38" stroke-width="1.76"/><line x1="205.49" y1="436.98" x2="176.13" y2="447.96" stroke="#586c76" stroke-opacity="0.38" stroke-width="1.77"/><line x1="176.13" y1="447.96" x2="146.78" y2="458.95" stroke="#586c76" stroke-opacity="0.38" stroke-width="1.78"/><line x1="146.78" y1="458.95" x2="117.42" y2="469.93" stroke="#586c76" stroke-opacity="0.38" stroke-width="1.79"/><line x1="117.42" y1="469.93" x2="88.07" y2="480.91" stroke="#586c76" stroke-opacity="0.38" stroke-width="1.81"/><line x1="88.07" y1="480.91" x2="58.71" y2="491.89" stroke="#586c76" stroke-opacity="0.38" stroke-width="1.82"/><line x1="58.71" y1="491.89" x2="29.36" y2="502.87" stroke="#586c76" stroke-opacity="0.38" stroke-width="1.83"/><line x1="29.36" y1="502.87" x2="0" y2="513.86" stroke="#586c76" stroke-opacity="0.38" stroke-width="1.85"/><line x1="578.33" y1="426" x2="619.91" y2="439.91" stroke="#586c76" stroke-opacity="0.37" stroke-width="1.11"/><line x1="619.91" y1="439.91" x2="661.5" y2="453.81" stroke="#586c76" stroke-opacity="0.37" stroke-width="1.13"/><line x1="661.5" y1="453.81" x2="703.08" y2="467.72" stroke="#586c76" stroke-opacity="0.37" stroke-width="1.16"/><line x1="703.08" y1="467.72" x2="744.66" y2="481.62" stroke="#586c76" stroke-opacity="0.37" stroke-width="1.18"/><line x1="744.66" y1="481.62" x2="786.25" y2="495.53" stroke="#586c76" stroke-opacity="0.37" stroke-width="1.2"/><line x1="786.25" y1="495.53" x2="827.83" y2="509.43" stroke="#586c76" stroke-opacity="0.37" stroke-width="1.22"/><line x1="827.83" y1="509.43" x2="869.42" y2="523.34" stroke="#586c76" stroke-opacity="0.37" stroke-width="1.24"/><line x1="869.42" y1="523.34" x2="911" y2="537.24" stroke="#586c76" stroke-opacity="0.37" stroke-width="1.27"/><line x1="320.08" y1="426" x2="280.07" y2="441.94" stroke="#586c76" stroke-opacity="0.37" stroke-width="1.11"/><line x1="280.07" y1="441.94" x2="240.06" y2="457.87" stroke="#586c76" stroke-opacity="0.37" stroke-width="1.14"/><line x1="240.06" y1="457.87" x2="200.05" y2="473.81" stroke="#586c76" stroke-opacity="0.37" stroke-width="1.16"/><line x1="200.05" y1="473.81" x2="160.04" y2="489.75" stroke="#586c76" stroke-opacity="0.37" stroke-width="1.19"/><line x1="160.04" y1="489.75" x2="120.03" y2="505.69" stroke="#586c76" stroke-opacity="0.37" stroke-width="1.21"/><line x1="120.03" y1="505.69" x2="80.02" y2="521.62" stroke="#586c76" stroke-opacity="0.37" stroke-width="1.24"/><line x1="80.02" y1="521.62" x2="40.01" y2="537.56" stroke="#586c76" stroke-opacity="0.37" stroke-width="1.27"/><line x1="40.01" y1="537.56" x2="0" y2="553.5" stroke="#586c76" stroke-opacity="0.37" stroke-width="1.29"/><line x1="484" y1="426" x2="537.37" y2="444.99" stroke="#586c76" stroke-opacity="0.37" stroke-width="1.12"/><line x1="537.37" y1="444.99" x2="590.75" y2="463.97" stroke="#586c76" stroke-opacity="0.37" stroke-width="1.15"/><line x1="590.75" y1="463.97" x2="644.12" y2="482.96" stroke="#586c76" stroke-opacity="0.37" stroke-width="1.18"/><line x1="644.12" y1="482.96" x2="697.5" y2="501.94" stroke="#586c76" stroke-opacity="0.37" stroke-width="1.21"/><line x1="697.5" y1="501.94" x2="750.87" y2="520.93" stroke="#586c76" stroke-opacity="0.37" stroke-width="1.24"/><line x1="750.87" y1="520.93" x2="804.25" y2="539.91" stroke="#586c76" stroke-opacity="0.37" stroke-width="1.27"/><line x1="804.25" y1="539.91" x2="857.62" y2="558.9" stroke="#586c76" stroke-opacity="0.37" stroke-width="1.3"/><line x1="857.62" y1="558.9" x2="911" y2="577.88" stroke="#586c76" stroke-opacity="0.37" stroke-width="1.33"/><line x1="405.29" y1="426" x2="354.63" y2="447.58" stroke="#586c76" stroke-opacity="0.37" stroke-width="1.12"/><line x1="354.63" y1="447.58" x2="303.97" y2="469.15" stroke="#586c76" stroke-opacity="0.37" stroke-width="1.15"/><line x1="303.97" y1="469.15" x2="253.3" y2="490.73" stroke="#586c76" stroke-opacity="0.37" stroke-width="1.19"/><line x1="253.3" y1="490.73" x2="202.64" y2="512.31" stroke="#586c76" stroke-opacity="0.37" stroke-width="1.22"/><line x1="202.64" y1="512.31" x2="151.98" y2="533.89" stroke="#586c76" stroke-opacity="0.37" stroke-width="1.25"/><line x1="151.98" y1="533.89" x2="101.32" y2="555.46" stroke="#586c76" stroke-opacity="0.37" stroke-width="1.29"/><line x1="101.32" y1="555.46" x2="50.66" y2="577.04" stroke="#586c76" stroke-opacity="0.37" stroke-width="1.32"/><line x1="50.66" y1="577.04" x2="0" y2="598.62" stroke="#586c76" stroke-opacity="0.37" stroke-width="1.36"/><line x1="389.63" y1="426" x2="454.81" y2="450.76" stroke="#586c76" stroke-opacity="0.37" stroke-width="1.12"/><line x1="454.81" y1="450.76" x2="519.98" y2="475.52" stroke="#586c76" stroke-opacity="0.37" stroke-width="1.16"/><line x1="519.98" y1="475.52" x2="585.15" y2="500.28" stroke="#586c76" stroke-opacity="0.37" stroke-width="1.2"/><line x1="585.15" y1="500.28" x2="650.32" y2="525.04" stroke="#586c76" stroke-opacity="0.37" stroke-width="1.24"/><line x1="650.32" y1="525.04" x2="715.49" y2="549.8" stroke="#586c76" stroke-opacity="0.37" stroke-width="1.28"/><line x1="715.49" y1="549.8" x2="780.66" y2="574.56" stroke="#586c76" stroke-opacity="0.37" stroke-width="1.32"/><line x1="780.66" y1="574.56" x2="845.83" y2="599.32" stroke="#586c76" stroke-opacity="0.37" stroke-width="1.36"/><line x1="845.83" y1="599.32" x2="911" y2="624.08" stroke="#586c76" stroke-opacity="0.37" stroke-width="1.4"/><line x1="490.47" y1="426" x2="429.16" y2="454.05" stroke="#586c76" stroke-opacity="0.37" stroke-width="1.12"/><line x1="429.16" y1="454.05" x2="367.86" y2="482.11" stroke="#586c76" stroke-opacity="0.37" stroke-width="1.17"/><line x1="367.86" y1="482.11" x2="306.55" y2="510.16" stroke="#586c76" stroke-opacity="0.37" stroke-width="1.21"/><line x1="306.55" y1="510.16" x2="245.24" y2="538.22" stroke="#586c76" stroke-opacity="0.37" stroke-width="1.26"/><line x1="245.24" y1="538.22" x2="183.93" y2="566.27" stroke="#586c76" stroke-opacity="0.37" stroke-width="1.3"/><line x1="183.93" y1="566.27" x2="122.62" y2="594.32" stroke="#586c76" stroke-opacity="0.37" stroke-width="1.35"/><line x1="122.62" y1="594.32" x2="61.31" y2="622.38" stroke="#586c76" stroke-opacity="0.37" stroke-width="1.39"/><line x1="61.31" y1="622.38" x2="0" y2="650.43" stroke="#586c76" stroke-opacity="0.37" stroke-width="1.44"/><line x1="295.24" y1="426" x2="372.21" y2="457.38" stroke="#586c76" stroke-opacity="0.37" stroke-width="1.13"/><line x1="372.21" y1="457.38" x2="449.18" y2="488.76" stroke="#586c76" stroke-opacity="0.37" stroke-width="1.18"/><line x1="449.18" y1="488.76" x2="526.15" y2="520.14" stroke="#586c76" stroke-opacity="0.37" stroke-width="1.23"/><line x1="526.15" y1="520.14" x2="603.12" y2="551.52" stroke="#586c76" stroke-opacity="0.37" stroke-width="1.28"/><line x1="603.12" y1="551.52" x2="680.09" y2="582.9" stroke="#586c76" stroke-opacity="0.37" stroke-width="1.33"/><line x1="680.09" y1="582.9" x2="757.06" y2="614.28" stroke="#586c76" stroke-opacity="0.37" stroke-width="1.38"/><line x1="757.06" y1="614.28" x2="834.03" y2="645.65" stroke="#586c76" stroke-opacity="0.37" stroke-width="1.43"/><line x1="834.03" y1="645.65" x2="911" y2="677.03" stroke="#586c76" stroke-opacity="0.37" stroke-width="1.48"/><line x1="575.64" y1="426" x2="503.68" y2="461.57" stroke="#586c76" stroke-opacity="0.37" stroke-width="1.13"/><line x1="503.68" y1="461.57" x2="431.73" y2="497.14" stroke="#586c76" stroke-opacity="0.37" stroke-width="1.19"/><line x1="431.73" y1="497.14" x2="359.77" y2="532.71" stroke="#586c76" stroke-opacity="0.37" stroke-width="1.24"/><line x1="359.77" y1="532.71" x2="287.82" y2="568.28" stroke="#586c76" stroke-opacity="0.37" stroke-width="1.3"/><line x1="287.82" y1="568.28" x2="215.86" y2="603.85" stroke="#586c76" stroke-opacity="0.37" stroke-width="1.36"/><line x1="215.86" y1="603.85" x2="143.91" y2="639.42" stroke="#586c76" stroke-opacity="0.37" stroke-width="1.41"/><line x1="143.91" y1="639.42" x2="71.95" y2="674.98" stroke="#586c76" stroke-opacity="0.37" stroke-width="1.47"/><line x1="71.95" y1="674.98" x2="0" y2="710.55" stroke="#586c76" stroke-opacity="0.37" stroke-width="1.53"/><line x1="200.82" y1="426" x2="289.59" y2="465.05" stroke="#586c76" stroke-opacity="0.38" stroke-width="1.77"/><line x1="289.59" y1="465.05" x2="378.36" y2="504.09" stroke="#586c76" stroke-opacity="0.38" stroke-width="1.82"/><line x1="378.36" y1="504.09" x2="467.14" y2="543.14" stroke="#586c76" stroke-opacity="0.38" stroke-width="1.86"/><line x1="467.14" y1="543.14" x2="555.91" y2="582.18" stroke="#586c76" stroke-opacity="0.38" stroke-width="1.91"/><line x1="555.91" y1="582.18" x2="644.68" y2="621.23" stroke="#586c76" stroke-opacity="0.38" stroke-width="1.95"/><line x1="644.68" y1="621.23" x2="733.45" y2="660.27" stroke="#586c76" stroke-opacity="0.38" stroke-width="2"/><line x1="733.45" y1="660.27" x2="822.23" y2="699.32" stroke="#586c76" stroke-opacity="0.38" stroke-width="2.04"/><line x1="822.23" y1="699.32" x2="911" y2="738.36" stroke="#586c76" stroke-opacity="0.38" stroke-width="2.09"/><line x1="660.77" y1="426" x2="580.54" y2="469.12" stroke="#586c76" stroke-opacity="0.38" stroke-width="1.77"/><line x1="580.54" y1="469.12" x2="500.3" y2="512.25" stroke="#586c76" stroke-opacity="0.38" stroke-width="1.82"/><line x1="500.3" y1="512.25" x2="420.07" y2="555.38" stroke="#586c76" stroke-opacity="0.38" stroke-width="1.88"/><line x1="420.07" y1="555.38" x2="339.83" y2="598.5" stroke="#586c76" stroke-opacity="0.38" stroke-width="1.93"/><line x1="339.83" y1="598.5" x2="259.6" y2="641.62" stroke="#586c76" stroke-opacity="0.38" stroke-width="1.98"/><line x1="259.6" y1="641.62" x2="179.36" y2="684.75" stroke="#586c76" stroke-opacity="0.38" stroke-width="2.02"/><line x1="179.36" y1="684.75" x2="99.12" y2="727.88" stroke="#586c76" stroke-opacity="0.38" stroke-width="2.08"/><line x1="99.12" y1="727.88" x2="18.89" y2="771" stroke="#586c76" stroke-opacity="0.38" stroke-width="2.12"/><line x1="106.37" y1="426" x2="196.68" y2="469.12" stroke="#586c76" stroke-opacity="0.37" stroke-width="1.13"/><line x1="196.68" y1="469.12" x2="286.99" y2="512.25" stroke="#586c76" stroke-opacity="0.37" stroke-width="1.2"/><line x1="286.99" y1="512.25" x2="377.3" y2="555.38" stroke="#586c76" stroke-opacity="0.37" stroke-width="1.27"/><line x1="377.3" y1="555.38" x2="467.61" y2="598.5" stroke="#586c76" stroke-opacity="0.37" stroke-width="1.34"/><line x1="467.61" y1="598.5" x2="557.92" y2="641.62" stroke="#586c76" stroke-opacity="0.37" stroke-width="1.41"/><line x1="557.92" y1="641.62" x2="648.24" y2="684.75" stroke="#586c76" stroke-opacity="0.37" stroke-width="1.48"/><line x1="648.24" y1="684.75" x2="738.55" y2="727.88" stroke="#586c76" stroke-opacity="0.37" stroke-width="1.55"/><line x1="738.55" y1="727.88" x2="828.86" y2="771" stroke="#586c76" stroke-opacity="0.37" stroke-width="1.62"/><line x1="745.89" y1="426" x2="672.65" y2="469.12" stroke="#586c76" stroke-opacity="0.37" stroke-width="1.13"/><line x1="672.65" y1="469.12" x2="599.42" y2="512.25" stroke="#586c76" stroke-opacity="0.37" stroke-width="1.2"/><line x1="599.42" y1="512.25" x2="526.19" y2="555.38" stroke="#586c76" stroke-opacity="0.37" stroke-width="1.27"/><line x1="526.19" y1="555.38" x2="452.95" y2="598.5" stroke="#586c76" stroke-opacity="0.37" stroke-width="1.34"/><line x1="452.95" y1="598.5" x2="379.72" y2="641.62" stroke="#586c76" stroke-opacity="0.37" stroke-width="1.41"/><line x1="379.72" y1="641.62" x2="306.48" y2="684.75" stroke="#586c76" stroke-opacity="0.37" stroke-width="1.48"/><line x1="306.48" y1="684.75" x2="233.25" y2="727.88" stroke="#586c76" stroke-opacity="0.37" stroke-width="1.55"/><line x1="233.25" y1="727.88" x2="160.02" y2="771" stroke="#586c76" stroke-opacity="0.37" stroke-width="1.62"/><line x1="11.88" y1="426" x2="94.46" y2="469.12" stroke="#586c76" stroke-opacity="0.37" stroke-width="1.13"/><line x1="94.46" y1="469.12" x2="177.03" y2="512.25" stroke="#586c76" stroke-opacity="0.37" stroke-width="1.2"/><line x1="177.03" y1="512.25" x2="259.6" y2="555.38" stroke="#586c76" stroke-opacity="0.37" stroke-width="1.27"/><line x1="259.6" y1="555.38" x2="342.18" y2="598.5" stroke="#586c76" stroke-opacity="0.37" stroke-width="1.34"/><line x1="342.18" y1="598.5" x2="424.75" y2="641.62" stroke="#586c76" stroke-opacity="0.37" stroke-width="1.41"/><line x1="424.75" y1="641.62" x2="507.32" y2="684.75" stroke="#586c76" stroke-opacity="0.37" stroke-width="1.48"/><line x1="507.32" y1="684.75" x2="589.9" y2="727.88" stroke="#586c76" stroke-opacity="0.37" stroke-width="1.55"/><line x1="589.9" y1="727.88" x2="672.47" y2="771" stroke="#586c76" stroke-opacity="0.37" stroke-width="1.62"/><line x1="830.97" y1="426" x2="764.74" y2="469.12" stroke="#586c76" stroke-opacity="0.37" stroke-width="1.13"/><line x1="764.74" y1="469.12" x2="698.51" y2="512.25" stroke="#586c76" stroke-opacity="0.37" stroke-width="1.2"/><line x1="698.51" y1="512.25" x2="632.27" y2="555.38" stroke="#586c76" stroke-opacity="0.37" stroke-width="1.27"/><line x1="632.27" y1="555.38" x2="566.04" y2="598.5" stroke="#586c76" stroke-opacity="0.37" stroke-width="1.34"/><line x1="566.04" y1="598.5" x2="499.81" y2="641.62" stroke="#586c76" stroke-opacity="0.37" stroke-width="1.41"/><line x1="499.81" y1="641.62" x2="433.57" y2="684.75" stroke="#586c76" stroke-opacity="0.37" stroke-width="1.48"/><line x1="433.57" y1="684.75" x2="367.34" y2="727.88" stroke="#586c76" stroke-opacity="0.37" stroke-width="1.55"/><line x1="367.34" y1="727.88" x2="301.1" y2="771" stroke="#586c76" stroke-opacity="0.37" stroke-width="1.62"/><line x1="0" y1="473.62" x2="64.5" y2="510.79" stroke="#586c76" stroke-opacity="0.37" stroke-width="1.21"/><line x1="64.5" y1="510.79" x2="129.01" y2="547.96" stroke="#586c76" stroke-opacity="0.37" stroke-width="1.26"/><line x1="129.01" y1="547.96" x2="193.51" y2="585.14" stroke="#586c76" stroke-opacity="0.37" stroke-width="1.32"/><line x1="193.51" y1="585.14" x2="258.02" y2="622.31" stroke="#586c76" stroke-opacity="0.37" stroke-width="1.38"/><line x1="258.02" y1="622.31" x2="322.52" y2="659.48" stroke="#586c76" stroke-opacity="0.37" stroke-width="1.44"/><line x1="322.52" y1="659.48" x2="387.02" y2="696.65" stroke="#586c76" stroke-opacity="0.37" stroke-width="1.5"/><line x1="387.02" y1="696.65" x2="451.53" y2="733.83" stroke="#586c76" stroke-opacity="0.37" stroke-width="1.56"/><line x1="451.53" y1="733.83" x2="516.03" y2="771" stroke="#586c76" stroke-opacity="0.37" stroke-width="1.62"/><line x1="911" y1="429.67" x2="852.39" y2="472.33" stroke="#586c76" stroke-opacity="0.37" stroke-width="1.14"/><line x1="852.39" y1="472.33" x2="793.79" y2="515" stroke="#586c76" stroke-opacity="0.37" stroke-width="1.21"/><line x1="793.79" y1="515" x2="735.18" y2="557.67" stroke="#586c76" stroke-opacity="0.37" stroke-width="1.28"/><line x1="735.18" y1="557.67" x2="676.58" y2="600.33" stroke="#586c76" stroke-opacity="0.37" stroke-width="1.34"/><line x1="676.58" y1="600.33" x2="617.97" y2="643" stroke="#586c76" stroke-opacity="0.37" stroke-width="1.41"/><line x1="617.97" y1="643" x2="559.36" y2="685.67" stroke="#586c76" stroke-opacity="0.37" stroke-width="1.48"/><line x1="559.36" y1="685.67" x2="500.76" y2="728.33" stroke="#586c76" stroke-opacity="0.37" stroke-width="1.55"/><line x1="500.76" y1="728.33" x2="442.15" y2="771" stroke="#586c76" stroke-opacity="0.37" stroke-width="1.62"/><line x1="0" y1="539.89" x2="44.94" y2="568.78" stroke="#586c76" stroke-opacity="0.37" stroke-width="1.3"/><line x1="44.94" y1="568.78" x2="89.89" y2="597.66" stroke="#586c76" stroke-opacity="0.37" stroke-width="1.35"/><line x1="89.89" y1="597.66" x2="134.83" y2="626.55" stroke="#586c76" stroke-opacity="0.37" stroke-width="1.4"/><line x1="134.83" y1="626.55" x2="179.77" y2="655.44" stroke="#586c76" stroke-opacity="0.37" stroke-width="1.44"/><line x1="179.77" y1="655.44" x2="224.71" y2="684.33" stroke="#586c76" stroke-opacity="0.37" stroke-width="1.49"/><line x1="224.71" y1="684.33" x2="269.66" y2="713.22" stroke="#586c76" stroke-opacity="0.37" stroke-width="1.53"/><line x1="269.66" y1="713.22" x2="314.6" y2="742.11" stroke="#586c76" stroke-opacity="0.37" stroke-width="1.58"/><line x1="314.6" y1="742.11" x2="359.54" y2="771" stroke="#586c76" stroke-opacity="0.37" stroke-width="1.63"/><line x1="911" y1="500.36" x2="870.02" y2="534.19" stroke="#586c76" stroke-opacity="0.37" stroke-width="1.25"/><line x1="870.02" y1="534.19" x2="829.04" y2="568.02" stroke="#586c76" stroke-opacity="0.37" stroke-width="1.3"/><line x1="829.04" y1="568.02" x2="788.06" y2="601.85" stroke="#586c76" stroke-opacity="0.37" stroke-width="1.35"/><line x1="788.06" y1="601.85" x2="747.08" y2="635.68" stroke="#586c76" stroke-opacity="0.37" stroke-width="1.41"/><line x1="747.08" y1="635.68" x2="706.1" y2="669.51" stroke="#586c76" stroke-opacity="0.37" stroke-width="1.46"/><line x1="706.1" y1="669.51" x2="665.12" y2="703.34" stroke="#586c76" stroke-opacity="0.37" stroke-width="1.52"/><line x1="665.12" y1="703.34" x2="624.14" y2="737.17" stroke="#586c76" stroke-opacity="0.37" stroke-width="1.57"/><line x1="624.14" y1="737.17" x2="583.16" y2="771" stroke="#586c76" stroke-opacity="0.37" stroke-width="1.62"/><line x1="0" y1="623.48" x2="25.38" y2="641.92" stroke="#586c76" stroke-opacity="0.38" stroke-width="1.99"/><line x1="25.38" y1="641.92" x2="50.75" y2="660.36" stroke="#586c76" stroke-opacity="0.38" stroke-width="2.01"/><line x1="50.75" y1="660.36" x2="76.13" y2="678.8" stroke="#586c76" stroke-opacity="0.38" stroke-width="2.03"/><line x1="76.13" y1="678.8" x2="101.5" y2="697.24" stroke="#586c76" stroke-opacity="0.38" stroke-width="2.05"/><line x1="101.5" y1="697.24" x2="126.88" y2="715.68" stroke="#586c76" stroke-opacity="0.38" stroke-width="2.08"/><line x1="126.88" y1="715.68" x2="152.25" y2="734.12" stroke="#586c76" stroke-opacity="0.38" stroke-width="2.1"/><line x1="152.25" y1="734.12" x2="177.63" y2="752.56" stroke="#586c76" stroke-opacity="0.38" stroke-width="2.12"/><line x1="177.63" y1="752.56" x2="203" y2="771" stroke="#586c76" stroke-opacity="0.38" stroke-width="2.14"/><line x1="911" y1="592.88" x2="887.64" y2="615.15" stroke="#586c76" stroke-opacity="0.38" stroke-width="1.96"/><line x1="887.64" y1="615.15" x2="864.28" y2="637.41" stroke="#586c76" stroke-opacity="0.38" stroke-width="1.98"/><line x1="864.28" y1="637.41" x2="840.92" y2="659.68" stroke="#586c76" stroke-opacity="0.38" stroke-width="2.01"/><line x1="840.92" y1="659.68" x2="817.56" y2="681.94" stroke="#586c76" stroke-opacity="0.38" stroke-width="2.03"/><line x1="817.56" y1="681.94" x2="794.2" y2="704.21" stroke="#586c76" stroke-opacity="0.38" stroke-width="2.06"/><line x1="794.2" y1="704.21" x2="770.84" y2="726.47" stroke="#586c76" stroke-opacity="0.38" stroke-width="2.09"/><line x1="770.84" y1="726.47" x2="747.48" y2="748.74" stroke="#586c76" stroke-opacity="0.38" stroke-width="2.11"/><line x1="747.48" y1="748.74" x2="724.12" y2="771" stroke="#586c76" stroke-opacity="0.38" stroke-width="2.14"/><line x1="0" y1="732.2" x2="5.8" y2="737.05" stroke="#586c76" stroke-opacity="0.37" stroke-width="1.59"/><line x1="5.8" y1="737.05" x2="11.6" y2="741.9" stroke="#586c76" stroke-opacity="0.37" stroke-width="1.6"/><line x1="11.6" y1="741.9" x2="17.41" y2="746.75" stroke="#586c76" stroke-opacity="0.37" stroke-width="1.61"/><line x1="17.41" y1="746.75" x2="23.21" y2="751.6" stroke="#586c76" stroke-opacity="0.37" stroke-width="1.62"/><line x1="23.21" y1="751.6" x2="29.01" y2="756.45" stroke="#586c76" stroke-opacity="0.37" stroke-width="1.62"/><line x1="29.01" y1="756.45" x2="34.81" y2="761.3" stroke="#586c76" stroke-opacity="0.37" stroke-width="1.63"/><line x1="34.81" y1="761.3" x2="40.61" y2="766.15" stroke="#586c76" stroke-opacity="0.37" stroke-width="1.64"/><line x1="40.61" y1="766.15" x2="46.42" y2="771" stroke="#586c76" stroke-opacity="0.37" stroke-width="1.65"/><line x1="911" y1="719.2" x2="905.26" y2="725.67" stroke="#586c76" stroke-opacity="0.37" stroke-width="1.57"/><line x1="905.26" y1="725.67" x2="899.51" y2="732.15" stroke="#586c76" stroke-opacity="0.37" stroke-width="1.58"/><line x1="899.51" y1="732.15" x2="893.77" y2="738.62" stroke="#586c76" stroke-opacity="0.37" stroke-width="1.59"/><line x1="893.77" y1="738.62" x2="888.02" y2="745.1" stroke="#586c76" stroke-opacity="0.37" stroke-width="1.6"/><line x1="888.02" y1="745.1" x2="882.28" y2="751.57" stroke="#586c76" stroke-opacity="0.37" stroke-width="1.61"/><line x1="882.28" y1="751.57" x2="876.54" y2="758.05" stroke="#586c76" stroke-opacity="0.37" stroke-width="1.62"/><line x1="876.54" y1="758.05" x2="870.79" y2="764.52" stroke="#586c76" stroke-opacity="0.37" stroke-width="1.63"/><line x1="870.79" y1="764.52" x2="865.05" y2="771" stroke="#586c76" stroke-opacity="0.37" stroke-width="1.64"/><line x1="311.2" y1="507.6" x2="383.3" y2="474.4" stroke="#4a555b" stroke-width="0.9" stroke-opacity="0.8"/><line x1="383.3" y1="474.4" x2="610" y2="568.8" stroke="#4a555b" stroke-width="0.9" stroke-opacity="0.8"/><line x1="311.2" y1="507.6" x2="344.6" y2="523.0" stroke="#4a555b" stroke-width="0.9" stroke-opacity="0.8"/><line x1="344.6" y1="523.0" x2="415.2" y2="488.8" stroke="#4a555b" stroke-width="0.9" stroke-opacity="0.8"/><line x1="348.9" y1="490.4" x2="533.3" y2="572.4" stroke="#4a555b" stroke-width="0.9" stroke-opacity="0.8"/><line x1="450.6" y1="503.3" x2="417.6" y2="520.3" stroke="#4a555b" stroke-width="0.9" stroke-opacity="0.8"/><line x1="487.4" y1="519.1" x2="453.6" y2="536.8" stroke="#4a555b" stroke-width="0.9" stroke-opacity="0.8"/><line x1="525.9" y1="534.8" x2="493.1" y2="553.7" stroke="#4a555b" stroke-width="0.9" stroke-opacity="0.8"/><line x1="567.5" y1="551.8" x2="497" y2="594.3" stroke="#4a555b" stroke-width="0.9" stroke-opacity="0.8"/><line x1="497" y1="594.3" x2="540.4" y2="614.6" stroke="#4a555b" stroke-width="0.9" stroke-opacity="0.8"/><line x1="610" y1="568.8" x2="540.4" y2="614.6" stroke="#4a555b" stroke-width="0.9" stroke-opacity="0.8"/><line x1="344.6" y1="523" x2="492.7" y2="724.5" stroke="#4a555b" stroke-width="0.9" stroke-opacity="0.8"/><line x1="381.5" y1="505.9" x2="527" y2="700.9" stroke="#4a555b" stroke-width="0.9" stroke-opacity="0.8"/><path d="M492.7 724.5 L527 700.9 L567.4 722.3 L534.1 747.6 Z" fill="none" stroke="#6a5e5e" stroke-width="0.8"/><line x1="363.5" y1="514.8" x2="509.4" y2="712.7" stroke="#f2f0e6" stroke-width="1.15"/><path d="M17 757.5 V743.5" stroke="#6a7070" stroke-width="1.1"/><path d="M17 757.5 L29.8 764" stroke="#d8701e" stroke-width="1.1"/><path d="M17 757.5 L12 759.8" stroke="#3a55c8" stroke-width="1.1"/><text x="17" y="744.2" font-size="10.5" fill="#111" font-family="Liberation Sans" textLength="7" lengthAdjust="spacingAndGlyphs">y</text><text x="30.2" y="763.8" font-size="12.5" fill="#d8701e" font-family="Liberation Sans" textLength="6.5" lengthAdjust="spacingAndGlyphs">x</text><text x="5" y="764.8" font-size="12.5" fill="#3a55c8" font-family="Liberation Sans" textLength="7" lengthAdjust="spacingAndGlyphs">z</text></svg>
<div style="position:absolute;left:0;top:426px;width:911px;height:345px;overflow:hidden"><div style="position:absolute;left:0;top:-426px;width:932px;height:771px"><div style="position:absolute;left:0;top:0;width:60px;height:100px;transform-origin:0 0;transform:matrix3d(-0.38417151,0.02306177,0,-0.00023481056,-0.21026849,-0.021220279,0,0.00021104446,0,0,1,0,143.144,734.56146,0,1);font:700 100px/100px 'Liberation Sans',sans-serif;color:#8f92a2;-webkit-text-stroke:1px #8f92a2;">5</div><div style="position:absolute;left:0;top:0;width:60px;height:100px;transform-origin:0 0;transform:matrix3d(0.17992284,0.018157798,0,-0.00018058682,-0.32872842,0.019733528,0,-0.00020092303,0,0,1,0,800.78745,665.74885,0,1);font:700 100px/100px 'Liberation Sans',sans-serif;color:#989292;-webkit-text-stroke:3px #989292;">5</div><div style="position:absolute;left:0;top:0;width:60px;height:100px;transform-origin:0 0;transform:matrix3d(0.1609874,0.016246836,0,-0.0001615815,-0.29413239,0.017656733,0,-0.0001797775,0,0,1,0,458.24339,518.75078,0,1);font:700 100px/100px 'Liberation Sans',sans-serif;color:#928380;-webkit-text-stroke:3px #928380;">0</div><div style="position:absolute;left:0;top:0;width:60px;height:100px;transform-origin:0 0;transform:matrix3d(-0.30908559,0.018554372,0,-0.00018891708,-0.16917173,-0.017072798,0,0.00016979604,0,0,1,0,474.06256,550.1834,0,1);font:700 100px/100px 'Liberation Sans',sans-serif;color:#75899a;-webkit-text-stroke:3px #75899a;">0</div><div style="position:absolute;left:0;top:0;width:60px;height:100px;transform-origin:0 0;transform:matrix3d(0.12187649,0.012299766,0,-0.00012232626,-0.22267472,0.013367137,0,-0.00013610165,0,0,1,0,219.60804,418.52619,0,1);font:700 100px/100px 'Liberation Sans',sans-serif;color:#86807f;-webkit-text-stroke:0px #86807f;">-5</div></div></div>
<svg width="22" height="345" viewBox="910 426 22 345" style="position:absolute;left:910px;top:426px"><rect x="911" y="426" width="21" height="345" fill="#3a3a3a"/><rect x="911" y="426" width="1" height="345" fill="#2c2c2c"/><rect x="912" y="426" width="20" height="8" fill="#484848"/><rect x="912" y="426" width="20" height="1" fill="#5a5a5a"/><rect x="912" y="434" width="20" height="1" fill="#111"/><path d="M921 449 h8 l-4 -8 z" fill="#7c7c7c"/><rect x="922" y="457" width="5" height="1" fill="#666"/><rect x="912.5" y="466.5" width="20" height="24.5" fill="#75838e" stroke="#5e5458" stroke-width="1.2"/><path d="M917.5 475 L925 471 L933 474.5 V485 L925 489 L917.5 485.5 Z" fill="#d8d8d8"/><path d="M917.5 475 L921.2 473 L925 475 L921.3 477 Z M925 471 L928.8 472.8 L925 474.8 L921.2 473 Z" fill="#e8e8e8"/><path d="M921.2 473 L925 471 L928.8 472.8 L925 474.8Z" fill="#1a1a1a"/><path d="M925 475 L928.8 472.8 L933 474.5 L929 476.7Z" fill="#f0f0f0"/><path d="M917.5 475 L921.3 477 V481.2 L917.5 479.2 Z M921.3 481.2 L925 483.2 V489 L921.3 487Z" fill="#262626"/><path d="M925 479 L929 476.7 V481 L925 483.2 Z" fill="#2a2a2a"/><path d="M929 481 L933 479 V485 L929 487Z" fill="#bbb"/><path d="M916.5 499 Q919 496.5 923 499.5 L932 504 V510 Q926 511 921 507 Q916 503 916.5 499 Z" fill="#d8d8d8"/><path d="M918.5 500 Q920 498.8 922.5 501 L925 504.5 Q926 508 922 506 Q918 503 918.5 500 Z" fill="#222"/><path d="M926.5 505 L932 506 V509 Q928 509.5 926.5 505 Z" fill="#222"/><path d="M916.5 523 Q919 520.5 923 523.5 L932 528 V534 Q926 535 921 531 Q916 527 916.5 523 Z" fill="#d8d8d8"/><path d="M918.5 524 Q920 522.8 922.5 525 L925 528.5 Q926 532 922 530 Q918 527 918.5 524 Z" fill="#222"/><path d="M926.5 529 L932 530 V533 Q928 533.5 926.5 529 Z" fill="#222"/><rect x="917" y="531" width="9" height="8" rx="1" fill="#aaa"/><path d="M919 533 l4 2.5 l-4 2.5 z" fill="#eee"/><path d="M929 510 l3 -2 v3z" fill="#777"/><rect x="912" y="545" width="20" height="1" fill="#333"/><circle cx="924.3" cy="564.2" r="2.6" fill="#d8d8d8"/><path d="M919 597 Q918 592 923 591 L931 584" fill="none" stroke="#d8d8d8" stroke-width="1.4"/><circle cx="921" cy="595" r="2.5" fill="none" stroke="#d8d8d8" stroke-width="1.2"/><path d="M918 623 L928 612" stroke="#d0d0d0" stroke-width="1.6"/><circle cx="928.5" cy="612.5" r="2.5" fill="#e0e0e0"/><circle cx="921" cy="651" r="2.6" fill="#d8d8d8"/><text x="922" y="647" font-size="9" font-weight="700" fill="#e0e0e0" font-family="Liberation Sans">12</text><path d="M917 678 L926 670 L932 674 L930 682 Z" fill="#d8d8d8"/><path d="M926 677 L929 664" stroke="#eee" stroke-width="1.3"/><path d="M917 703 L926 695 L932 699 L930 707 Z" fill="#d8d8d8"/><text x="924" y="699" font-size="9" font-weight="700" fill="#e0e0e0" font-family="Liberation Sans">12</text><path d="M918 734.5 V719.5 H932 M918 734.5 Q920 721 932 719.5" fill="none" stroke="#c8c8c8" stroke-width="1"/><circle cx="918" cy="734.5" r="1.2" fill="#ddd"/><circle cx="918" cy="719.5" r="1.2" fill="#ddd"/><rect x="918" y="747" width="14" height="8.5" fill="#777"/><rect x="918" y="751" width="6" height="4.5" fill="#444"/><rect x="925" y="747" width="5" height="4" fill="#999"/><circle cx="918.5" cy="747" r="1.4" fill="#eee"/><circle cx="931.5" cy="747" r="1.4" fill="#eee"/><path d="M921 763.5 h8 l-4 7 z" fill="#7c7c7c"/></svg>
<!-- viewport buttons -->
<div class="abs" style="left:764.5px;top:431.8px;width:61px;height:23px;border-radius:12px;background:#5d6a72;border:1.6px solid #b0b6b9"></div>
<div class="abs" style="left:774.5px;top:435px;color:#dedede;font-size:12.9px;line-height:16px">Persp</div>
<div class="abs" style="left:810px;top:443px;width:0;height:0;border-left:3px solid transparent;border-right:3px solid transparent;border-top:3px solid #dedede"></div>
<div class="abs" style="left:832.7px;top:431.8px;width:72.5px;height:23px;border-radius:12px;background:#5d6a72;border:1.6px solid #b0b6b9"></div>
<div class="abs" style="left:842.4px;top:435px;color:#dedede;font-size:12.9px;line-height:16px">No cam</div>
<div class="abs" style="left:890px;top:443px;width:0;height:0;border-left:3px solid transparent;border-right:3px solid transparent;border-top:3px solid #dedede"></div>
</body></html>
